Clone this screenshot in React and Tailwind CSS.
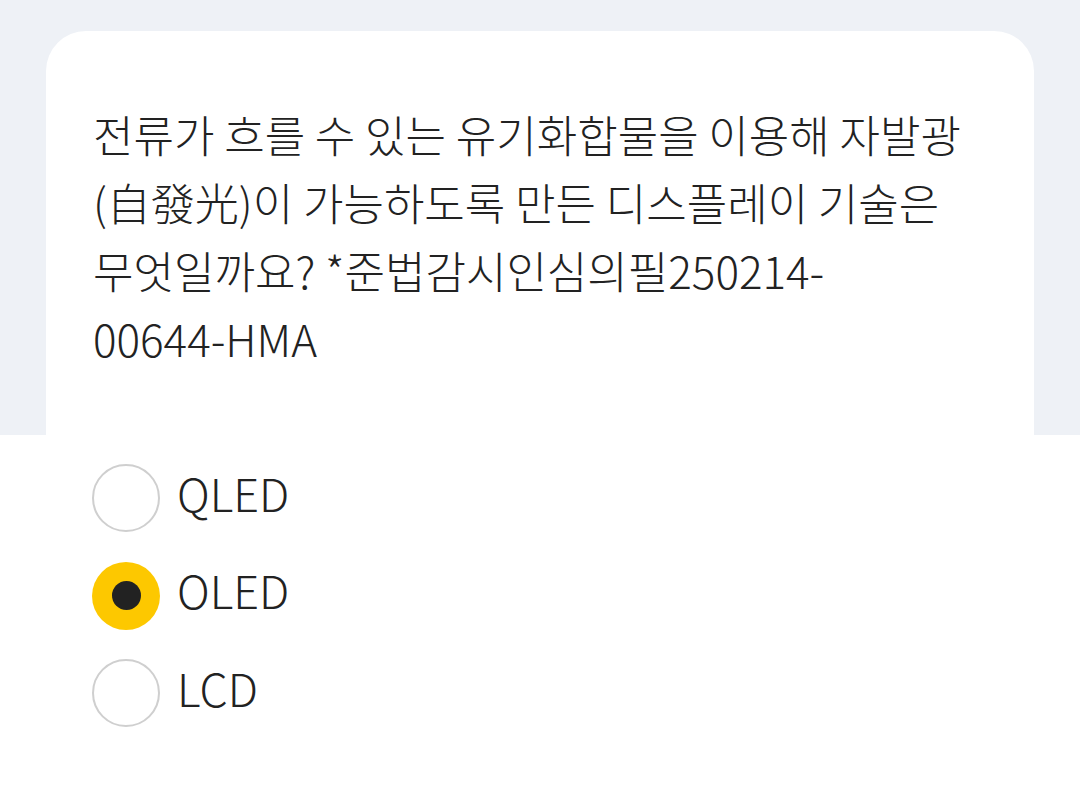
import { useState } from 'react'

const options = ['QLED', 'OLED', 'LCD']

function App() {
  const [selected, setSelected] = useState('OLED')

  return (
    <div
      className="min-h-screen bg-white text-[#222222]"
      style={{ fontFamily: '"Noto Sans CJK KR", "Noto Sans", sans-serif' }}
    >
      <div className="bg-[#eef1f6] px-[46px] pt-[31px]">
        <div className="rounded-t-[40px] bg-white px-[47px] pt-[69px] pb-[63px]">
          <p className="text-[44px] leading-[68px] font-light">
            전류가 흐를 수 있는 유기화합물을 이용해 자발광
            <br />
            (自發光)이 가능하도록 만든 디스플레이 기술은
            <br />
            무엇일까요? *준법감시인심의필250214-
            <br />
            00644-HMA
          </p>
        </div>
      </div>

      <div className="flex flex-col gap-[29.5px] px-[92px] pt-[29px]">
        {options.map((opt) => {
          const active = selected === opt
          return (
            <button
              key={opt}
              type="button"
              onClick={() => setSelected(opt)}
              className="flex items-center gap-[17px] text-left"
            >
              {active ? (
                <span className="flex h-[68px] w-[68px] items-center justify-center rounded-full bg-[#fdc800]">
                  <span className="h-[29px] w-[29px] rounded-full bg-[#222222]" />
                </span>
              ) : (
                <span className="h-[68px] w-[68px] rounded-full border-2 border-[#cfcfcf] bg-white" />
              )}
              <span className="pb-[12px] text-[45px] leading-none font-light">{opt}</span>
            </button>
          )
        })}
      </div>
    </div>
  )
}

export default App
